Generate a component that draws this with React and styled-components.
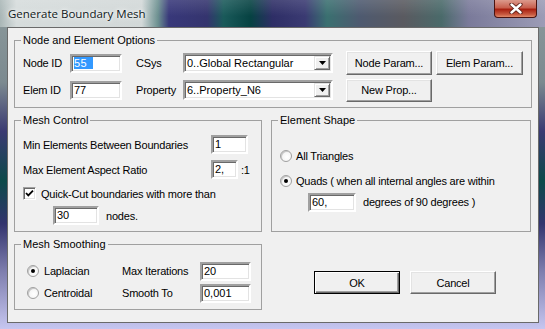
import React from 'react'
import styled, { createGlobalStyle } from 'styled-components'

const GlobalStyle = createGlobalStyle`
  html, body {
    margin: 0;
    padding: 0;
    background: #20204a;
  }
  body {
    font-family: 'Liberation Sans', Arial, sans-serif;
    font-size: 11px;
    color: #000;
  }
`

const Window = styled.div`
  width: 545px;
  height: 329px;
  display: flex;
  flex-direction: column;
  overflow: hidden;
  background: linear-gradient(180deg, #8c9a9c 0%, #7c8a90 25%, #3a3a72 40%, #0c4a4a 55%, #33346e 68%, #7c7cac 82%, #c6c6f0 100%);
`

const TitleBar = styled.div`
  height: 27px;
  flex: none;
  display: flex;
  align-items: flex-start;
  justify-content: space-between;
  background:
    linear-gradient(180deg, rgba(255,255,255,0.12) 0%, rgba(255,255,255,0) 60%),
    linear-gradient(90deg, #a9b6b6 0%, #d6dcdc 3%, #d2d8d8 26%, #6c9090 29%, #38387a 31%, #34346e 38%, #1a5a5a 41%, #064242 46%, #2e2e66 50%, #3a3a72 56%, #3a7070 60%, #4e5a70 66%, #5a5a60 74%, #4a6a6a 81%, #7a7a9a 86%, #9c9cb6 100%);
`

const Title = styled.div`
  padding: 6px 0 0 8px;
  font-family: 'Open Sans', 'Liberation Sans', sans-serif;
  font-size: 11.5px;
  color: #101820;
  text-shadow: 0 0 6px #fff, 0 0 3px #fff;
`

const CloseButton = styled.div`
  width: 41px;
  height: 17px;
  margin-right: 8px;
  display: flex;
  align-items: center;
  justify-content: center;
  border: 1px solid #4a1410;
  border-top: none;
  border-radius: 0 0 4px 4px;
  background: linear-gradient(180deg, #dc9a8c 0%, #c8604e 45%, #a82010 55%, #c85a40 85%, #e08a6a 100%);
`

const Client = styled.div`
  flex: 1;
  margin: 0 6px 6px 7px;
  padding: 6px 6px 0 6px;
  background: #f0f0f0;
  border: 1px solid #6a6a6a;
  display: flex;
  flex-direction: column;
  gap: 6px;
`

const Group = styled.fieldset`
  margin: 0;
  min-width: 0;
  padding: ${p => p.$pad || '4px 6px 5px 8px'};
  border: 1px solid #a0a0a0;
  border-radius: 0;
`

const Legend = styled.legend`
  padding: 0 2px;
  margin-left: -2px;
  line-height: 13px;
  font-size: 11px;
`

const NodeGrid = styled.div`
  display: grid;
  grid-template-columns: 47px 52px 61px 150px 13px 86px 4px 87px;
  grid-template-rows: 24px 24px;
  row-gap: 3px;
  align-items: center;
`

const Label = styled.span`
  white-space: nowrap;
  letter-spacing: -0.2px;
  padding-left: ${p => p.$indent || 0}px;
  width: ${p => p.$w ? `${p.$w}px` : 'auto'};
  flex: none;
`

const Edit = styled.div`
  box-sizing: border-box;
  width: ${p => p.$w}px;
  height: 19px;
  flex: none;
  background: #fff;
  border: 2px solid;
  border-color: #a0a0a0 #fff #fff #a0a0a0;
  box-shadow: inset 1px 1px 0 #696969, inset -1px -1px 0 #e3e3e3;
  padding: 1px 0 0 2px;
  line-height: 13px;
  white-space: nowrap;
  overflow: hidden;
`

const Selected = styled.span`
  background: #3399ff;
  color: #fff;
  padding-right: 6px;
  letter-spacing: 0.5px;
`

const Combo = styled.div`
  box-sizing: border-box;
  width: 150px;
  height: 20px;
  background: #fff;
  border: 2px solid;
  border-color: #a0a0a0 #fff #fff #a0a0a0;
  box-shadow: inset 1px 1px 0 #696969, inset -1px -1px 0 #e3e3e3;
  display: flex;
  align-items: center;
  justify-content: space-between;
  padding: 0 1px 0 2px;
`

const DropButton = styled.div`
  box-sizing: border-box;
  width: 16px;
  height: 14px;
  background: #f0f0f0;
  border: 1px solid;
  border-color: #e3e3e3 #696969 #696969 #e3e3e3;
  box-shadow: inset 1px 1px 0 #fff, inset -1px -1px 0 #a0a0a0;
  display: flex;
  align-items: center;
  justify-content: center;
`

const Button = styled.div`
  box-sizing: border-box;
  width: ${p => p.$w || 86}px;
  height: ${p => p.$h || 24}px;
  display: flex;
  align-items: center;
  justify-content: center;
  background: #f0f0f0;
  border: 1px solid;
  border-color: ${p => p.$default ? '#000' : '#fff #696969 #696969 #fff'};
  box-shadow: ${p => p.$default
    ? 'inset 1px 1px 0 #fff, inset -1px -1px 0 #696969, inset -2px -2px 0 #a0a0a0'
    : 'inset -1px -1px 0 #a0a0a0, inset 1px 1px 0 #e3e3e3'};
  letter-spacing: -0.2px;
  white-space: nowrap;
`

const MiddleRow = styled.div`
  display: grid;
  grid-template-columns: 248px 260px;
  column-gap: 9px;
  align-items: stretch;
`

const Line = styled.div`
  display: flex;
  align-items: center;
  height: ${p => p.$h}px;
  margin-top: ${p => p.$top || 0}px;
  padding-left: ${p => p.$indent || 0}px;
  gap: ${p => p.$gap || 0}px;
`

const CheckBox = styled.div`
  box-sizing: border-box;
  width: 13px;
  height: 13px;
  flex: none;
  background: #fff;
  border: 1px solid;
  border-color: #a0a0a0 #fff #fff #a0a0a0;
  box-shadow: inset 1px 1px 0 #696969, inset -1px -1px 0 #e3e3e3;
  display: flex;
  align-items: center;
  justify-content: center;
`

const Radio = styled.div`
  box-sizing: border-box;
  width: 12px;
  height: 12px;
  flex: none;
  border-radius: 50%;
  border: 1px solid #a0a0a0;
  background: radial-gradient(circle at 60% 60%, #ffffff 0%, #f4f4f4 60%, #dcdcdc 100%);
  box-shadow: inset 1px 1px 0 #c8c8c8;
  display: flex;
  align-items: center;
  justify-content: center;

  &::after {
    content: '';
    width: 4px;
    height: 4px;
    border-radius: 50%;
    background: ${p => p.$on ? '#000' : 'transparent'};
  }
`

const BottomRow = styled.div`
  display: grid;
  grid-template-columns: 248px 260px;
  column-gap: 9px;
  align-items: start;
`

const SmoothGrid = styled.div`
  display: grid;
  grid-template-columns: 95px 78px 51px;
  grid-template-rows: 22px 22px;
  align-items: center;
  padding-left: 4px;
`

const DialogButtons = styled.div`
  display: flex;
  gap: 10px;
  padding: 33px 0 0 43px;
`

const CloseGlyph = () => (
  <svg width="14" height="11" viewBox="0 0 14 11">
    <path d="M2.5 1.5 L11.5 9.5 M11.5 1.5 L2.5 9.5" stroke="#5a1e16" strokeWidth="4.2" strokeLinecap="round" />
    <path d="M2.5 1.5 L11.5 9.5 M11.5 1.5 L2.5 9.5" stroke="#fff" strokeWidth="2.4" strokeLinecap="round" />
  </svg>
)

const Arrow = () => (
  <svg width="7" height="4" viewBox="0 0 7 4">
    <path d="M0 0 H7 L3.5 4 Z" fill="#000" />
  </svg>
)

const Check = () => (
  <svg width="9" height="9" viewBox="0 0 9 9">
    <path d="M1 4 L3.3 6.4 L8 1.6" stroke="#000" strokeWidth="1.8" fill="none" />
  </svg>
)

const App = () => {
  return (
    <>
      <GlobalStyle />
      <Window>
        <TitleBar>
          <Title>Generate Boundary Mesh</Title>
          <CloseButton><CloseGlyph /></CloseButton>
        </TitleBar>
        <Client>
          <Group>
            <Legend>Node and Element Options</Legend>
            <NodeGrid>
              <Label>Node ID</Label>
              <Edit $w={52}><Selected>55</Selected></Edit>
              <Label $indent={14}>CSys</Label>
              <Combo><span>0..Global Rectangular</span><DropButton><Arrow /></DropButton></Combo>
              <span />
              <Button>Node Param...</Button>
              <span />
              <Button $w={87}>Elem Param...</Button>

              <Label>Elem ID</Label>
              <Edit $w={52}>77</Edit>
              <Label $indent={14}>Property</Label>
              <Combo><span>6..Property_N6</span><DropButton><Arrow /></DropButton></Combo>
              <span />
              <Button $h={23}>New Prop...</Button>
            </NodeGrid>
          </Group>

          <MiddleRow>
            <Group $pad="4px 6px 5px 8px">
              <Legend>Mesh Control</Legend>
              <Line $h={25} $top={1}>
                <Label $w={188}>Min Elements Between Boundaries</Label>
                <Edit $w={37}>1</Edit>
              </Line>
              <Line $h={25} $gap={3}>
                <Label $w={185}>Max Element Aspect Ratio</Label>
                <Edit $w={27}>2,</Edit>
                <Label>:1</Label>
              </Line>
              <Line $h={23} $gap={5}>
                <CheckBox><Check /></CheckBox>
                <Label>Quick-Cut boundaries with more than</Label>
              </Line>
              <Line $h={21} $indent={30} $gap={7}>
                <Edit $w={46}>30</Edit>
                <Label>nodes.</Label>
              </Line>
            </Group>

            <Group $pad="4px 6px 5px 8px">
              <Legend>Element Shape</Legend>
              <Line $h={22} $top={14} $gap={4}>
                <Radio />
                <Label>All Triangles</Label>
              </Line>
              <Line $h={22} $top={3} $gap={4}>
                <Radio $on />
                <Label>Quads ( when all internal angles are within</Label>
              </Line>
              <Line $h={20} $indent={28} $gap={7}>
                <Edit $w={48}>60,</Edit>
                <Label>degrees of 90 degrees )</Label>
              </Line>
            </Group>
          </MiddleRow>

          <BottomRow>
            <Group $pad="9px 6px 5px 8px">
              <Legend>Mesh Smoothing</Legend>
              <SmoothGrid>
                <Line $h={22} $gap={5}><Radio $on /><Label>Laplacian</Label></Line>
                <Label>Max Iterations</Label>
                <Edit $w={51}>20</Edit>
                <Line $h={22} $gap={5}><Radio /><Label>Centroidal</Label></Line>
                <Label>Smooth To</Label>
                <Edit $w={51}>0,001</Edit>
              </SmoothGrid>
            </Group>
            <DialogButtons>
              <Button $default $h={23}>OK</Button>
              <Button $h={23}>Cancel</Button>
            </DialogButtons>
          </BottomRow>
        </Client>
      </Window>
    </>
  )
}

export default App
